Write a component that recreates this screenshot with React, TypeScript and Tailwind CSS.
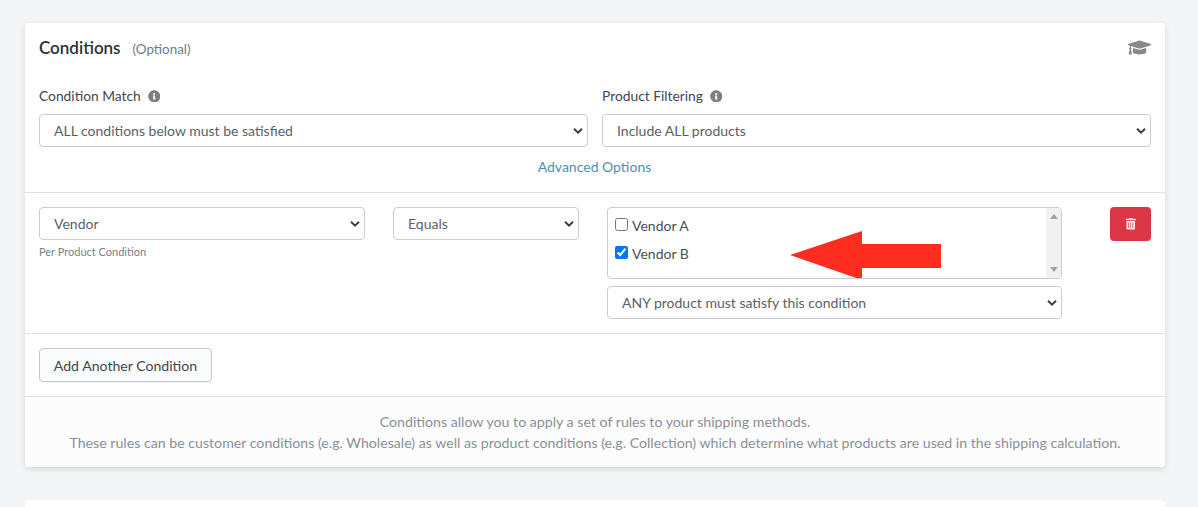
import React from "react";
import { FaGraduationCap, FaInfoCircle, FaTrashAlt } from "react-icons/fa";

const font = "font-['Lato',sans-serif]";

function Chevron() {
  return (
    <svg className="absolute right-[4px] top-1/2 -translate-y-1/2 pointer-events-none" width="10" height="7" viewBox="0 0 10 7" fill="none">
      <path d="M1 1.2 L5 5.2 L9 1.2" stroke="#3a3f45" strokeWidth="2" />
    </svg>
  );
}

function Select({ value, className }: { value: string; className: string }) {
  return (
    <div className={`relative h-[33px] bg-white border border-[#c9ced6] rounded-[4px] flex items-center pl-[14px] text-[14px] text-[#5b6168] ${className}`}>
      <span>{value}</span>
      <Chevron />
    </div>
  );
}

function Label({ text }: { text: string }) {
  return (
    <div className="flex items-center gap-[7px] h-[18px] mb-[9px] -mt-[1px] text-[13.8px] text-[#3f4750]">
      <span>{text}</span>
      <FaInfoCircle className="text-[#7b7f85] text-[12.5px]" />
    </div>
  );
}

function VendorRow({ text, checked }: { text: string; checked: boolean }) {
  return (
    <label className="flex items-center gap-[4px] h-[28px] pl-[7px] text-[14px] text-[#4a5058]">
      <input type="checkbox" defaultChecked={checked} className="m-0 -mt-[2px] w-[13px] h-[13px] accent-[#0075ff]" />
      <span>{text}</span>
    </label>
  );
}

export default function App() {
  return (
    <div className={`${font} w-[1198px] h-[507px] overflow-hidden bg-[#f4f5f7] pt-[23px] px-[25px]`}>
      <div className="w-[1140px] h-[444px] bg-white rounded-[4px] shadow-[0_2px_6px_rgba(0,0,0,0.12)] flex flex-col">
        <div className="h-[170px] px-[14px] border-b border-[#dfe1e4] flex flex-col">
          <div className="flex items-center justify-between h-[50px]">
            <div className="flex items-baseline gap-[12px]">
              <span className="text-[17px] font-semibold text-[#2b323a]">Conditions</span>
              <span className="text-[13.4px] text-[#6c7a8c]">(Optional)</span>
            </div>
            <FaGraduationCap className="text-[#8a8a8a] text-[23px] -mt-[1px]" />
          </div>
          <div className="flex gap-[14px] mt-[15px]">
            <div className="flex-1">
              <Label text="Condition Match" />
              <Select value="ALL conditions below must be satisfied" className="w-full" />
            </div>
            <div className="flex-1">
              <Label text="Product Filtering" />
              <Select value="Include ALL products" className="w-full" />
            </div>
          </div>
          <div className="text-center text-[14px] text-[#4a90b8] mt-[11px] leading-[18px] pr-[1px]">Advanced Options</div>
        </div>

        <div className="h-[141px] px-[14px] pt-[14px] border-b border-[#dfe1e4] flex gap-[28px]">
          <div className="w-[326px]">
            <Select value="Vendor" className="w-full" />
            <div className="text-[11px] text-[#7a8087] mt-[5px] leading-[14px]">Per Product Condition</div>
          </div>
          <Select value="Equals" className="w-[186px]" />
          <div className="w-[455px] flex flex-col gap-[7px]">
            <div className="relative h-[72px] border border-[#c9ced6] rounded-[4px] flex overflow-hidden">
              <div className="flex-1 pt-[3px]">
                <VendorRow text="Vendor A" checked={false} />
                <VendorRow text="Vendor B" checked={true} />
              </div>
              <div className="w-[15px] bg-[#f1f1f1] flex flex-col items-center justify-between py-[6px]">
                <svg width="8" height="5" viewBox="0 0 8 5"><path d="M4 0 L8 5 L0 5 Z" fill="#a3a3a3" /></svg>
                <svg width="8" height="5" viewBox="0 0 8 5"><path d="M0 0 L8 0 L4 5 Z" fill="#a3a3a3" /></svg>
              </div>
              <svg className="absolute left-[182px] top-[23px]" width="152" height="50" viewBox="0 0 152 50">
                <path d="M0 24 L72 0 L72 13 L151 13 L151 37 L72 37 L72 49 Z" fill="#ff2d20" />
              </svg>
            </div>
            <Select value="ANY product must satisfy this condition" className="w-full" />
          </div>
          <div className="ml-[20px] w-[41px] h-[34px] bg-[#dc3545] rounded-[4px] flex items-center justify-center">
            <FaTrashAlt className="text-[#fff0f0] text-[11.5px]" />
          </div>
        </div>

        <div className="h-[63px] px-[14px] pt-[14px] border-b border-[#dfe1e4]">
          <button className="h-[34px] w-[173px] pt-[1px] bg-[#fafbfc] border border-[#c4c9d0] rounded-[4px] shadow-[0_1px_1px_rgba(0,0,0,0.05)] text-[14.1px] text-[#3f4750]">
            Add Another Condition
          </button>
        </div>

        <div className="flex-1 bg-[#fcfcfc] rounded-b-[4px] pt-[14px] text-center text-[14.16px] leading-[21px] text-[#8a9099]">
          <div>Conditions allow you to apply a set of rules to your shipping methods.</div>
          <div>These rules can be customer conditions (e.g. Wholesale) as well as product conditions (e.g. Collection) which determine what products are used in the shipping calculation.</div>
        </div>
      </div>
      <div className="w-[1140px] h-[40px] mt-[33px] bg-white rounded-[4px]" />
    </div>
  );
}
